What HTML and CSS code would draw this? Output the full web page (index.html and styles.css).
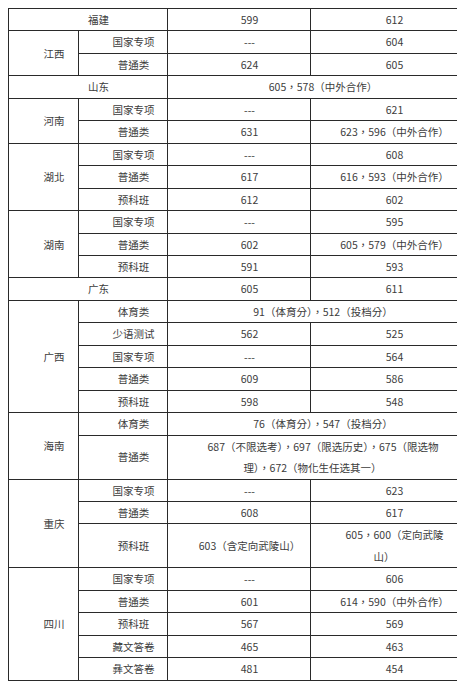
FILE: index.html
```html
<!DOCTYPE html>
<html lang="zh-TW">
<head>
<meta charset="utf-8">
<title>录取分数</title>
<link rel="stylesheet" href="styles.css">
</head>
<body>
<table class="score-table">
  <colgroup>
    <col class="c1"><col class="c2"><col class="c3"><col class="c4">
  </colgroup>
  <tbody>
    <tr><td colspan="2">福建</td><td>599</td><td>612</td></tr>
    <tr><td rowspan="2">江西</td><td>国家专项</td><td>---</td><td>604</td></tr>
    <tr><td>普通类</td><td>624</td><td>605</td></tr>
    <tr><td colspan="2">山东</td><td colspan="2">605，578（中外合作）</td></tr>
    <tr><td rowspan="2">河南</td><td>国家专项</td><td>---</td><td>621</td></tr>
    <tr><td>普通类</td><td>631</td><td>623，596（中外合作）</td></tr>
    <tr><td rowspan="3">湖北</td><td>国家专项</td><td>---</td><td>608</td></tr>
    <tr><td>普通类</td><td>617</td><td>616，593（中外合作）</td></tr>
    <tr><td>预科班</td><td>612</td><td>602</td></tr>
    <tr><td rowspan="3">湖南</td><td>国家专项</td><td>---</td><td>595</td></tr>
    <tr><td>普通类</td><td>602</td><td>605，579（中外合作）</td></tr>
    <tr><td>预科班</td><td>591</td><td>593</td></tr>
    <tr><td colspan="2">广东</td><td>605</td><td>611</td></tr>
    <tr><td rowspan="5">广西</td><td>体育类</td><td colspan="2">91（体育分），512（投档分）</td></tr>
    <tr><td>少语测试</td><td>562</td><td>525</td></tr>
    <tr><td>国家专项</td><td>---</td><td>564</td></tr>
    <tr><td>普通类</td><td>609</td><td>586</td></tr>
    <tr><td>预科班</td><td>598</td><td>548</td></tr>
    <tr><td rowspan="2">海南</td><td>体育类</td><td colspan="2">76（体育分），547（投档分）</td></tr>
    <tr><td>普通类</td><td colspan="2">687（不限选考），697（限选历史），675（限选物理），672（物化生任选其一）</td></tr>
    <tr><td rowspan="3">重庆</td><td>国家专项</td><td>---</td><td>623</td></tr>
    <tr><td>普通类</td><td>608</td><td>617</td></tr>
    <tr><td>预科班</td><td>603（含定向武陵山）</td><td>605，600（定向武陵山）</td></tr>
    <tr><td rowspan="5">四川</td><td>国家专项</td><td>---</td><td>606</td></tr>
    <tr><td>普通类</td><td>601</td><td>614，590（中外合作）</td></tr>
    <tr><td>预科班</td><td>567</td><td>569</td></tr>
    <tr><td>藏文答卷</td><td>465</td><td>463</td></tr>
    <tr><td>彝文答卷</td><td>481</td><td>454</td></tr>
  </tbody>
</table>
</body>
</html>
```
FILE: styles.css
```css
html, body {
  background: #ffffff;
}
body {
  margin: 8px;
  font-family: "Noto Sans CJK TC", "Noto Sans CJK SC", sans-serif;
  font-size: 10.5px;
  color: #3c3c3c;
}
.score-table {
  width: 449px;
  border-collapse: collapse;
  table-layout: fixed;
}
.c1 { width: 70px; }
.c2 { width: 89px; }
.c3 { width: 143px; }
.c4 { width: 147px; }
.score-table td {
  border: 1px solid #2a2a2a;
  padding: 0 7px;
  line-height: 21.45px;
  text-align: center;
  vertical-align: middle;
  text-indent: 2em;
}
```
